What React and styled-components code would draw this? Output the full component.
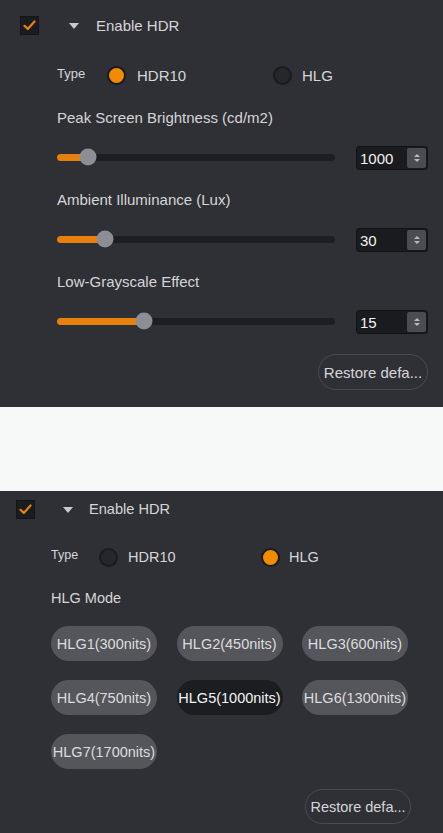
import React from "react";
import styled, { createGlobalStyle } from "styled-components";

const GlobalStyle = createGlobalStyle`
  html, body { margin: 0; padding: 0; background: #f7f8f8; overflow: hidden; }
  body { font-family: "Liberation Sans", Arial, sans-serif; }
  * { box-sizing: border-box; }
`;

const Page = styled.div`
  display: flex;
  flex-direction: column;
  width: 443px;
  height: 833px;
  overflow: hidden;
`;

const Panel = styled.section`
  flex-shrink: 0;
  display: flex;
  flex-direction: column;
  background: #2f3035;
  padding: ${(p) => p.$pt}px ${(p) => p.$pr}px ${(p) => p.$pb}px ${(p) => p.$pl}px;
`;

const Separator = styled.div`
  flex-shrink: 0;
  height: 84px;
  background: #f7f8f8;
`;

const HeaderRow = styled.div`
  display: flex;
  align-items: center;
  height: 19px;
`;

const CheckBox = styled.span`
  width: 19px;
  height: 19px;
  background: #1b1c1f;
  border: 1px solid #141518;
  display: flex;
  align-items: center;
  justify-content: center;
`;

const Caret = styled.span`
  margin-left: ${(p) => p.$ml}px;
  width: 0;
  height: 0;
  border-left: 5px solid transparent;
  border-right: 5px solid transparent;
  border-top: 6px solid #c9c9cb;
`;

const HeaderLabel = styled.span`
  margin-left: ${(p) => p.$ml}px;
  font-size: ${(p) => p.$fs}px;
  color: #d6d6d8;
  line-height: 19px;
`;

const Body = styled.div`
  display: flex;
  flex-direction: column;
  margin-left: ${(p) => p.$indent}px;
`;

const TypeRow = styled.div`
  display: flex;
  align-items: center;
  height: 20px;
  margin-top: ${(p) => p.$mt}px;
`;

const TypeLabel = styled.span`
  width: ${(p) => p.$w}px;
  font-size: ${(p) => p.$fs}px;
  color: #d6d6d8;
  margin-bottom: 4px;
`;

const RadioOption = styled.label`
  display: flex;
  align-items: center;
  width: ${(p) => p.$w}px;
`;

const RadioDot = styled.span`
  width: 19px;
  height: 19px;
  border-radius: 50%;
  border: 2px solid #1a1b1e;
  background: ${(p) => (p.$checked ? "#f18b00" : "#26272b")};
`;

const RadioText = styled.span`
  margin-left: ${(p) => p.$ml}px;
  font-size: ${(p) => p.$fs}px;
  color: #d6d6d8;
`;

const FieldLabel = styled.div`
  height: 20px;
  line-height: 20px;
  margin-top: ${(p) => p.$mt}px;
  font-size: ${(p) => p.$fs}px;
  color: #d6d6d8;
`;

const SliderRow = styled.div`
  display: flex;
  align-items: center;
  height: 24px;
  margin-top: 18px;
`;

const Track = styled.div`
  position: relative;
  width: 278px;
  height: 7px;
  margin-bottom: 2px;
  border-radius: 4px;
  background: #1d1e22;
`;

const Fill = styled.div`
  position: absolute;
  left: 0;
  top: 0;
  bottom: 0;
  border-radius: 4px;
  background: #e8800e;
`;

const Thumb = styled.div`
  position: absolute;
  top: 50%;
  width: 17px;
  height: 17px;
  border-radius: 50%;
  background: #8b8e97;
  transform: translate(-50%, -50%);
`;

const SpinBox = styled.div`
  margin-left: 21px;
  width: 72px;
  height: 24px;
  display: flex;
  align-items: center;
  border-radius: 3px;
  border: 1px solid #121316;
  background: #1a1b1e;
`;

const SpinValue = styled.span`
  flex: 1;
  padding-left: 3px;
  font-size: 15px;
  color: #f2f2f2;
`;

const SpinArrows = styled.span`
  width: 19px;
  height: 20px;
  margin-right: 1px;
  border-radius: 2px;
  background: #4b4c51;
  display: flex;
  flex-direction: column;
  align-items: center;
  justify-content: center;
  gap: 2px;
`;

const ArrowUp = styled.span`
  width: 0;
  height: 0;
  border-left: 3px solid transparent;
  border-right: 3px solid transparent;
  border-bottom: 3px solid #b8b9bd;
`;

const ArrowDown = styled.span`
  width: 0;
  height: 0;
  border-left: 3px solid transparent;
  border-right: 3px solid transparent;
  border-top: 3px solid #b8b9bd;
`;

const Footer = styled.div`
  display: flex;
  justify-content: flex-end;
  margin-top: ${(p) => p.$mt}px;
`;

const RestoreButton = styled.button`
  width: ${(p) => p.$w}px;
  height: ${(p) => p.$h}px;
  padding: 0;
  border-radius: 18px;
  border: 1px solid #4a4b50;
  background: transparent;
  color: #d6d6d8;
  font-family: inherit;
  font-size: ${(p) => p.$fs}px;
  white-space: nowrap;
`;

const ModeGrid = styled.div`
  display: grid;
  grid-template-columns: repeat(3, 106px);
  column-gap: 19.5px;
  row-gap: 19px;
  margin-top: 18px;
`;

const ModeButton = styled.button`
  height: 35px;
  padding: 0;
  border: none;
  border-radius: 17.5px;
  background: ${(p) => (p.$selected ? "#1c1d21" : "#55565c")};
  color: ${(p) => (p.$selected ? "#f4f4f4" : "#dcdcdc")};
  font-family: inherit;
  font-size: 14.5px;
  white-space: nowrap;
  display: flex;
  align-items: center;
  justify-content: center;
`;

const Check = () => (
  <svg width="13" height="11" viewBox="0 0 13 11">
    <path d="M1.5 5.8 L4.8 9 L11.5 1.5" fill="none" stroke="#e8820c" strokeWidth="2.2" strokeLinecap="round" strokeLinejoin="round" />
  </svg>
);

const Header = ({ caretMl, labelMl, fs }) => (
  <HeaderRow>
    <CheckBox>
      <Check />
    </CheckBox>
    <Caret $ml={caretMl} />
    <HeaderLabel $ml={labelMl} $fs={fs}>Enable HDR</HeaderLabel>
  </HeaderRow>
);

const Slider = ({ pct, value }) => (
  <SliderRow>
    <Track>
      <Fill style={{ width: `${pct}%` }} />
      <Thumb style={{ left: `${pct}%` }} />
    </Track>
    <SpinBox>
      <SpinValue>{value}</SpinValue>
      <SpinArrows>
        <ArrowUp />
        <ArrowDown />
      </SpinArrows>
    </SpinBox>
  </SliderRow>
);

const fields = [
  { label: "Peak Screen Brightness (cd/m2)", pct: 11.3, value: "1000", mt: 23 },
  { label: "Ambient Illuminance (Lux)", pct: 17.4, value: "30", mt: 20 },
  { label: "Low-Grayscale Effect", pct: 31.3, value: "15", mt: 20 },
];

const modes = [
  "HLG1(300nits)",
  "HLG2(450nits)",
  "HLG3(600nits)",
  "HLG4(750nits)",
  "HLG5(1000nits)",
  "HLG6(1300nits)",
  "HLG7(1700nits)",
];

export default function App() {
  return (
    <Page>
      <GlobalStyle />
      <Panel $pt={16} $pr={15} $pb={17} $pl={20}>
        <Header caretMl={30} labelMl={17} fs={15} />
        <Body $indent={37}>
          <TypeRow $mt={30}>
            <TypeLabel $w={50} $fs={13}>Type</TypeLabel>
            <RadioOption $w={166}>
              <RadioDot $checked />
              <RadioText $ml={11} $fs={15}>HDR10</RadioText>
            </RadioOption>
            <RadioOption $w={100}>
              <RadioDot />
              <RadioText $ml={10} $fs={15}>HLG</RadioText>
            </RadioOption>
          </TypeRow>
          {fields.map((f) => (
            <React.Fragment key={f.label}>
              <FieldLabel $mt={f.mt} $fs={15}>{f.label}</FieldLabel>
              <Slider pct={f.pct} value={f.value} />
            </React.Fragment>
          ))}
        </Body>
        <Footer $mt={20}>
          <RestoreButton $w={110} $h={36} $fs={15}>Restore defa...</RestoreButton>
        </Footer>
      </Panel>
      <Separator />
      <Panel $pt={9} $pr={32} $pb={9} $pl={16}>
        <Header caretMl={28} labelMl={16} fs={14.6} />
        <Body $indent={35}>
          <TypeRow $mt={28}>
            <TypeLabel $w={48} $fs={12.5}>Type</TypeLabel>
            <RadioOption $w={162}>
              <RadioDot />
              <RadioText $ml={10} $fs={14.5}>HDR10</RadioText>
            </RadioOption>
            <RadioOption $w={100}>
              <RadioDot $checked />
              <RadioText $ml={9} $fs={14.5}>HLG</RadioText>
            </RadioOption>
          </TypeRow>
          <FieldLabel $mt={21} $fs={14.5}>HLG Mode</FieldLabel>
          <ModeGrid>
            {modes.map((m) => (
              <ModeButton key={m} $selected={m === "HLG5(1000nits)"}>{m}</ModeButton>
            ))}
          </ModeGrid>
        </Body>
        <Footer $mt={20}>
          <RestoreButton $w={106} $h={35} $fs={14.5}>Restore defa...</RestoreButton>
        </Footer>
      </Panel>
    </Page>
  );
}
